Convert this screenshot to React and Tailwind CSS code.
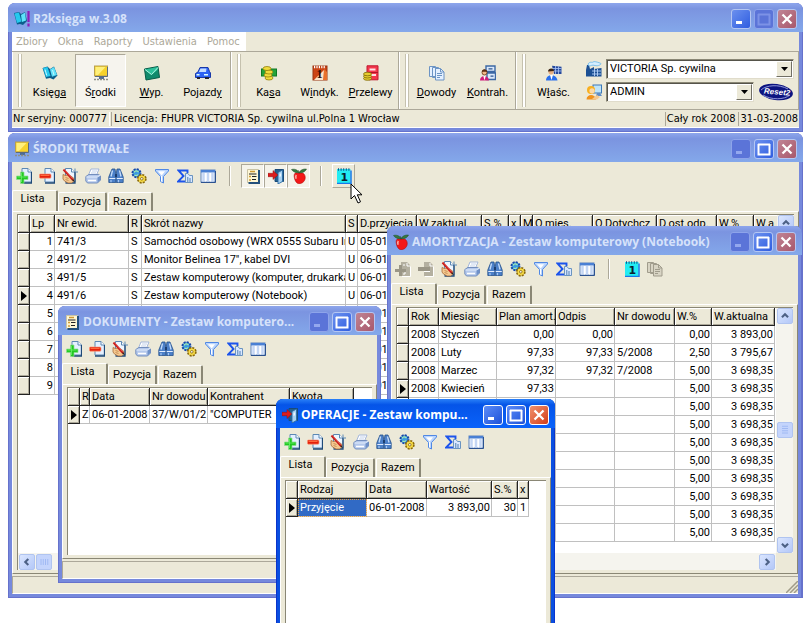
import clsx from 'clsx';

/* ---------- icons ---------- */

const Svg = ({ size = 16, children, className }) => (
  <svg width={size} height={size} viewBox="0 0 16 16" className={clsx('shrink-0', className)} aria-hidden="true">
    {children}
  </svg>
);

const Page = ({ x = 6, fill = '#e4f0ff', stroke = '#5c88b4' }) => (
  <>
    <path d={`M${x} .5h6l3.500 3.500v10h-9.500z`} fill={fill} stroke={stroke} />
    <path d={`M${x + 6} .5v3.500h3.500`} fill="#fff" stroke={stroke} />
    <path d={`M${x} 15h9.500v-11`} fill="none" stroke="#1f4a78" strokeWidth="1.300" />
  </>
);

const AddIcon = () => (
  <Svg>
    <Page />
    <path d="M4.500 4h3.500v4h4v3.500h-4v4h-3.500v-4h-4v-3.500h4z" fill="#22c822" stroke="#8fdc8f" strokeWidth=".7" />
    <path d="M5.500 5v9M1.500 9h9" stroke="#6cf06c" strokeWidth=".8" />
  </Svg>
);

const RemoveIcon = () => (
  <Svg>
    <Page />
    <rect x=".4" y="6" width="11.600" height="4.200" rx="1" fill="#e4200c" stroke="#ffa07c" strokeWidth=".7" />
    <path d="M1.500 7.500h9" stroke="#ff6a3c" />
  </Svg>
);

const AddOffIcon = () => (
  <Svg>
    <path d="M6 1h6l3 3v11h-9z" fill="#b4b0a0" />
    <path d="M4 4h3v4h4v3h-4v4h-3v-4h-4v-3h4z" fill="#9a9686" />
    <path d="M8 4h2M10 11v2h-2M12 2v3h3M7 15.500h8.500v-10" stroke="#fff" fill="none" />
  </Svg>
);

const RemoveOffIcon = () => (
  <Svg>
    <path d="M6 1h6l3 3v11h-9z" fill="#b4b0a0" />
    <rect y="6" width="12" height="4" fill="#9a9686" />
    <path d="M6 10.500h6M12 2v3h3M7 15.500h8.500v-10" stroke="#fff" fill="none" />
  </Svg>
);

const EditIcon = () => (
  <Svg>
    <Page x={3.500} fill="#eef6ff" />
    <path d="M13 .5v3.500h3" fill="none" stroke="#5c88b4" />
    <path d="M1 6.500l2.500 1 3-.5 3 1.500 2.500 2-.5 3-2 1.500H6l-3.500-2L1 11z" fill="#f4c890" stroke="#a0602c" strokeWidth=".7" />
    <path d="M3.500 9.500l3 1M3.500 11.500l3 1" stroke="#b8783c" strokeWidth=".7" />
    <path d="M1.500 1.500l9.500 10.500" stroke="#c81c1c" strokeWidth="2" />
    <path d="M2.500 1.500l8 9" stroke="#f47060" strokeWidth=".7" />
    <path d="M11 11l2 3-2.800-1.600z" fill="#2a1a10" />
  </Svg>
);

const PrintIcon = () => (
  <Svg>
    <path d="M6 1h8l-2.500 6H3.500z" fill="#fff" stroke="#a3b6da" />
    <path d="M.8 8.500l3-2h10l1.700 1.500v4l-3 3H2.500L.8 13z" fill="#b4c8ec" stroke="#6a86b8" strokeWidth=".9" />
    <path d="M1.500 9h11l2.500-2" stroke="#e4eefc" fill="none" />
    <path d="M12.500 9.500v5.200l2.800-2.700V8z" fill="#6e90c8" />
    <path d="M3 12.500h8" stroke="#fff" strokeWidth="1.500" />
    <path d="M7 3h5M6 5h5" stroke="#b4c6e6" strokeWidth=".8" />
  </Svg>
);

const BinocularsIcon = () => (
  <Svg>
    <path d="M4 1h3l.8 5v8.500H.8V9z" fill="#4c80c8" stroke="#24508c" strokeWidth=".8" />
    <path d="M12 1H9L8.200 6v8.500h7V9z" fill="#4c80c8" stroke="#24508c" strokeWidth=".8" />
    <path d="M4.500 2.500L3 8.500M11.500 2.500l1.500 6" stroke="#c4dcfa" strokeWidth="1.300" />
    <path d="M1.300 10.500h6M8.800 10.500h6" stroke="#e4eeff" />
    <path d="M3 12v2.300M10.500 12v2.300" stroke="#a8c8f4" strokeWidth="1.200" />
    <rect x="7" y="6" width="2" height="3" fill="#1c3e70" />
  </Svg>
);

const GearsIcon = () => (
  <Svg>
    <circle cx="5.500" cy="5.200" r="4" fill="#3d9be0" stroke="#1747a8" strokeWidth="2" strokeDasharray="2 1.100" />
    <path d="M3 4.500c1-2 3-2 4.500-.5M3.500 7c1 .8 2.500.8 3.500-.5" stroke="#a4ecb0" strokeWidth="1.200" fill="none" />
    <circle cx="10.800" cy="10.800" r="3.700" fill="#f2cf2c" stroke="#8a6a08" strokeWidth="2.400" strokeDasharray="1.900 1" />
    <circle cx="10.800" cy="10.800" r="3.200" fill="#f8dc48" />
    <circle cx="10.800" cy="10.800" r="1.300" fill="#fff" stroke="#7a5c06" strokeWidth=".8" />
  </Svg>
);

const FilterIcon = () => (
  <Svg>
    <path d="M1.500 1.500h13v1.500L9.500 8.500v6.500l-3-1.500V8.500L1.500 3z" fill="#bcd6fc" stroke="#5088e4" />
    <path d="M4 3.200h7L7.700 7.500z" fill="#fff" />
    <path d="M7.500 8v5.500" stroke="#fff" />
  </Svg>
);

const SigmaIcon = () => (
  <Svg>
    <path d="M10.500 5V2.500H1.500L6.500 8l-5.500 5.500H9" fill="none" stroke="#1c54ec" strokeWidth="1.900" />
    <path d="M8.500 5.500h2.500l1.500 2h3v7h-7z" fill="#dbe8ff" stroke="#6a94c0" />
    <path d="M10.800 9v5M13 10v4" stroke="#4f7fb4" />
  </Svg>
);

const ColumnsIcon = () => (
  <Svg>
    <rect x="1" y="2" width="14" height="12" fill="#fff" stroke="#5a82bc" />
    <rect x="1" y="2" width="14" height="2.500" fill="#4a80d4" />
    <path d="M3.500 5v8.500M8 5v8.500M12.500 5v8.500" stroke="#c4d6f4" strokeWidth="2.500" />
    <path d="M5.500 5v8.500M10.500 5v8.500" stroke="#fff" />
    <path d="M1 14.500h14.500V3" fill="none" stroke="#2c5290" />
  </Svg>
);

const DocumentIcon = () => (
  <Svg>
    <path d="M2.500 1.500h11v13h-11z" fill="#fff6d4" stroke="#c9c3a4" />
    <path d="M14 2v13H3.500" stroke="#24507c" strokeWidth="2" fill="none" />
    <path d="M5 3.500h5M4 8.500h2M4 12h2" stroke="#d09a34" strokeWidth="1.300" />
    <path d="M4 6h7.500M7 8.500h4.500M7 11.500h4" stroke="#222" strokeWidth="1.200" />
  </Svg>
);

const DoorIcon = () => (
  <Svg>
    <path d="M7 1.500h8.500v12H7z" fill="#24608c" stroke="#194a78" />
    <path d="M10 4.500l4.500-2.500v11.500L10 16z" fill="#a9d2f2" stroke="#2c6ca4" strokeWidth=".9" />
    <path d="M11.500 6l1.500-.8v3l-1.500.8z" fill="#e8f6ff" />
    <path d="M0 5.300h5V2.500l4.800 4.500L5 11.500V8.700H0z" fill="#dc1c1c" stroke="#8c1010" strokeWidth=".5" />
  </Svg>
);

const AppleIcon = () => (
  <Svg>
    <path d="M7 5.200C4.500 4 3 5.500 3.200 8.200c.3 4 2.200 7.500 5 7.500C12 15.500 14.500 12.500 14.200 9c-.3-3.500-3-5-7.200-3.800z" fill="#f41818" stroke="#b40c0c" strokeWidth=".6" />
    <path d="M5.300 7c-.7 1-.7 2.200-.2 3.700" stroke="#ffc0b4" strokeWidth="1.400" fill="none" />
    <path d="M8 5.500L7.500 2M8 4.500C5 5 2 4 .5 1.500c3-.8 6 0 7.500 3zM8 4.500c1-2 4-4 7.500-3.500-1 2.500-4.500 4.500-7.500 3.500z" fill="#357a40" stroke="#1c4a24" strokeWidth=".5" />
  </Svg>
);

const CalendarIcon = () => (
  <Svg>
    <rect x="1" y="1" width="13.500" height="14.500" fill="#22ecf2" />
    <path d="M15 2.500v13H1" stroke="#1878e8" strokeWidth="1.500" fill="none" />
    <path d="M2 1.500h12" stroke="#14508c" strokeWidth="2.500" strokeDasharray="1 1.600" />
    <text x="4.500" y="13" fontSize="11" fontWeight="700" fontFamily="DejaVu Sans, sans-serif" fill="#0a2230">1</text>
  </Svg>
);

const CalendarRedIcon = () => (
  <Svg>
    <rect x="1" y="1" width="14" height="14" fill="#cc4414" stroke="#9a3410" />
    <path d="M2 2h12" stroke="#fff" strokeWidth="2.500" strokeDasharray="1.200 1.200" />
    <path d="M2 15L12 5v10z" fill="#fbe4cc" />
    <path d="M12 4l3 3v8h-4z" fill="#e8702c" />
    <text x="4.500" y="13" fontSize="12" fontWeight="700" fontFamily="Liberation Serif, serif" fill="#2a0d04">1</text>
  </Svg>
);

const BookIcon = () => (
  <Svg>
    <path d="M.5 3l5-1.500L8 4l4-2.500 3.500 9-4 4L8 13l-4 .8z" fill="#0a5f8c" />
    <path d="M1 3l4.500-1 3 9L4 12z" fill="#25c9ee" />
    <path d="M8 4.500L12 2l3 8-5 1.800z" fill="#5fe2fa" />
    <path d="M3 4.500l1.800 6M10.500 5l1.500 5" stroke="#c4f8ff" />
  </Svg>
);

const LogoIcon = () => (
  <Svg>
    <path d="M0 2l5-1 2 2 4-2 2 9-4 4-3-1-3 .5z" fill="#0a5f8c" />
    <path d="M.5 2.500l4.500-1 2.500 9L3 12z" fill="#25c9ee" />
    <path d="M7 4l4-2.500 1 8-4 1.500z" fill="#5fe2fa" />
    <path d="M14.500 0v11M14.500 12.500v3" stroke="#8a1fb8" strokeWidth="2.200" />
  </Svg>
);

const MonitorIcon = () => (
  <Svg>
    <rect x="1.500" y="1" width="13" height="10" fill="#f6d22c" stroke="#b8a050" />
    <path d="M2.500 10V2h10L5 10z" fill="#fff07c" />
    <path d="M14.500 2v9.500H2" stroke="#5a6a80" fill="none" />
    <path d="M6 12h5v2H6z" fill="#4f6c94" />
    <path d="M1 14.500h14" stroke="#8d8f86" strokeWidth="1.500" strokeDasharray="2 1" />
  </Svg>
);

const EnvelopeIcon = () => (
  <Svg>
    <path d="M.5 4L14 1.500l1.500 11L2 15z" fill="#108a6c" stroke="#075c48" />
    <path d="M1 4.500l13-2.500-.5 3-6 5z" fill="#2cc09a" />
    <path d="M1 4.500l6.500 5 6.500-7" stroke="#b0f4e2" fill="none" />
  </Svg>
);

const CarIcon = () => (
  <Svg>
    <path d="M5 2.500h8l1.500 4 1 1.500v4.500H.5V8.500L3 7z" fill="#2c62f4" stroke="#1838a8" />
    <path d="M5.500 3.500h6L11 7H3.800z" fill="#c4dcff" />
    <path d="M1.500 9.800h3M9 9.800h4" stroke="#dff" strokeWidth="1.500" />
    <rect x="2" y="12" width="3" height="2" fill="#223" />
    <rect x="10" y="12" width="4" height="2" fill="#223" />
  </Svg>
);

const CashIcon = () => (
  <Svg>
    <rect x="0.500" y="4" width="15" height="7" fill="#25a33a" stroke="#0e7a24" />
    <g fill="#f0dc3c" stroke="#94800c" strokeWidth=".8">
      <ellipse cx="8" cy="13" rx="4" ry="2" />
      <ellipse cx="7" cy="10" rx="4" ry="2" />
      <ellipse cx="8" cy="7" rx="4" ry="2" />
      <ellipse cx="6" cy="3.500" rx="4" ry="2" />
    </g>
  </Svg>
);

const TransferIcon = () => (
  <Svg>
    <path d="M4 .8h11v14H6V8H4z" fill="#f4384c" stroke="#c01830" />
    <path d="M6.500 4.500h6M8 10h5" stroke="#ffe0e4" strokeWidth="1.800" />
    <path d="M4 7.500h11" stroke="#b01428" />
    <g fill="#e4cc30" stroke="#7c6a08" strokeWidth=".8">
      <ellipse cx="4.500" cy="13.500" rx="4" ry="1.800" />
      <ellipse cx="4.500" cy="11.200" rx="4" ry="1.800" />
      <ellipse cx="4.500" cy="9" rx="4" ry="1.800" />
    </g>
  </Svg>
);

const DocsIcon = ({ off }) => {
  const fill = off ? '#d8d4c4' : '#e4f0ff';
  const line = off ? '#a09c8c' : '#6c94c4';
  return (
    <Svg>
      <path d="M.5 1.500h6v10h-6zM3.500 2.500h6v10h-6z" fill={fill} stroke={line} />
      <path d="M6.500 3.500h5l3.500 3.500v8H6.500z" fill={fill} stroke={line} />
      <path d="M11.500 3.500v3.500H15M8 8.500h5M8 10.500h5M8 12.500h3" stroke={line} fill="none" />
    </Svg>
  );
};

const ContactIcon = () => (
  <Svg>
    <path d="M6 1h9v5.500H6zM7 8h8.500v6.500H7z" fill="#dbe8fa" stroke="#3c68a4" strokeWidth="1.400" />
    <path d="M8.500 3.800h4M10.500 11.200h3" stroke="#2c5590" strokeWidth="1.300" />
    <circle cx="4.500" cy="7.500" r="2.500" fill="#f0b888" stroke="#6a3414" strokeWidth=".8" />
    <path d="M1.800 6.800c0-3.500 5.200-3.500 5.400 0z" fill="#5b2c10" />
    <path d="M0 15.500c0-6 8.500-6 9 0z" fill="#d01c78" />
    <path d="M3.300 11l1.200 4.500L5.800 11z" fill="#fff" />
  </Svg>
);

const OwnerIcon = () => (
  <Svg>
    <path d="M6 .8l9.500 1V9H8z" fill="#24489c" />
    <path d="M7 3.500h8.500M7 6h8.500M9.500 1v8M12.500 1.500V9" stroke="#a9c4f4" strokeWidth=".8" />
    <circle cx="5" cy="6.800" r="2.600" fill="#e8b080" />
    <path d="M2 6.500c0-4 6-4 6-.5z" fill="#3a2414" />
    <path d="M0 15.500c0-7 10.500-7 11.500 0z" fill="#2a70ec" />
    <path d="M4 10l1.500 5L7 10z" fill="#fff" />
  </Svg>
);

const FactoryIcon = () => (
  <Svg>
    <path d="M0 15.500V9l1-5h2l1 4 4-2v2l7.500-1v8.500z" fill="#1c5094" />
    <path d="M6 10h9M6 13h9M8.500 8v7M11.500 8v7" stroke="#b4d0f8" strokeWidth=".9" />
    <path d="M2 3c2-3 4-1 5-2s4 0 7 1-2 3.500-5 2.500-4 .5-6 .5z" fill="#d4eeff" stroke="#68b8e8" strokeWidth=".8" />
  </Svg>
);

const UserIcon = () => (
  <Svg>
    <rect x="7" y="1" width="8.500" height="8" fill="#bfe4f8" stroke="#3c78b8" />
    <path d="M11 9h3l2 3h-6z" fill="#5c8cc8" />
    <circle cx="5" cy="6" r="4" fill="#f8b020" />
    <circle cx="6" cy="6.800" r="2.600" fill="#fbd9a8" />
    <path d="M.5 15.500c0-6 9-6 9.500 0z" fill="#f0921c" />
    <path d="M6 15l5-4 3 2-3 2.500z" fill="#f4c890" />
  </Svg>
);

/* ---------- window chrome ---------- */

const CaptionButton = ({ kind, active, dim }) => (
  <button
    aria-label={kind}
    className={clsx(
      'w-5 h-5 rounded-[3px] border flex items-center justify-center',
      active ? 'border-white' : dim ? 'border-[#8ea4ea]' : 'border-[#b4c6f2]',
      kind === 'close'
        ? active ? 'bg-linear-to-br from-[#f0906c] to-[#d23a10]' : 'bg-linear-to-br from-[#c08494] to-[#a8586c]'
        : active
          ? 'bg-linear-to-br from-[#5c8cf8] to-[#1c50d8]'
          : dim ? 'bg-[#5b74d8]' : 'bg-linear-to-br from-[#6c90ee] to-[#2f5ce0]'
    )}
  >
    <Svg size={16}>
      {kind === 'minimize' && <path d="M3 11.500h6" stroke={dim ? '#94a8ee' : '#fff'} strokeWidth="3" />}
      {kind === 'maximize' && (
        <path d="M2.500 3v10.500h11V3M2 3.500h12" stroke={dim ? '#7d92e6' : '#fff'} strokeWidth="2" fill="none" />
      )}
      {kind === 'close' && <path d="M3.500 3.500l9 9M12.500 3.500l-9 9" stroke="#fff" strokeWidth="2.300" />}
    </Svg>
  </button>
);

const Window = ({ title, icon, active, minDim = true, maxDim, className, children }) => (
  <section
    className={clsx(
      'flex flex-col rounded-t-[7px] overflow-hidden',
      active ? 'bg-[#0a4fe0] shadow-[inset_0_0_0_1px_#0a34cc]' : 'bg-[#7689dc] shadow-[inset_0_0_0_1px_#6672cc]',
      className
    )}
  >
    <header
      className={clsx(
        'h-[29px] shrink-0 flex items-center gap-[3px] pl-[6px] pr-[6px] pt-[3px] bg-linear-to-b',
        active
          ? 'from-[#2a80f8] via-[#0554e8] via-20% to-[#0a62fa]'
          : 'from-[#8ea6ec] via-[#7b94e0] via-20% to-[#84a8ea]'
      )}
    >
      {icon}
      <h2
        className={clsx(
          "flex-1 min-w-0 whitespace-nowrap text-[12px] font-bold font-['Open_Sans',sans-serif]",
          active ? 'text-white' : 'text-[#d6e2fa]'
        )}
      >
        {title}
      </h2>
      <div className="flex gap-[3px]">
        <CaptionButton kind="minimize" active={active} dim={minDim && !active} />
        <CaptionButton kind="maximize" active={active} dim={maxDim} />
        <CaptionButton kind="close" active={active} />
      </div>
    </header>
    <div className="flex-1 min-h-0 mx-1 mb-1 flex flex-col bg-[#ece9d8]">{children}</div>
  </section>
);

/* ---------- list windows ---------- */

const ToolButton = ({ label, pressed, raised, children }) => (
  <button
    aria-label={label}
    className={clsx(
      'w-[23px] h-6 flex items-center justify-center border',
      pressed && 'bg-[#f5f3ea] border-t-[#aca899] border-l-[#aca899] border-b-white border-r-white',
      raised && 'border-t-white border-l-white border-b-[#aca899] border-r-[#aca899]',
      !pressed && !raised && 'border-transparent'
    )}
  >
    {children}
  </button>
);

const ToolSeparator = () => (
  <div className="w-[22px] flex justify-center">
    <div className="w-[2px] h-5 border-l border-[#aca899] bg-white" />
  </div>
);

const ListTools = ({ readOnly, children }) => (
  <div className="h-7 shrink-0 flex items-center">
    <ToolButton label="Dodaj">{readOnly ? <AddOffIcon /> : <AddIcon />}</ToolButton>
    <ToolButton label="Usuń">{readOnly ? <RemoveOffIcon /> : <RemoveIcon />}</ToolButton>
    <ToolButton label="Edytuj"><EditIcon /></ToolButton>
    <ToolButton label="Drukuj"><PrintIcon /></ToolButton>
    <ToolButton label="Szukaj"><BinocularsIcon /></ToolButton>
    <ToolButton label="Opcje"><GearsIcon /></ToolButton>
    <ToolButton label="Filtr"><FilterIcon /></ToolButton>
    <ToolButton label="Suma"><SigmaIcon /></ToolButton>
    <ToolButton label="Kolumny"><ColumnsIcon /></ToolButton>
    {children}
  </div>
);

const Tabs = () => (
  <div role="tablist" className="h-[21px] shrink-0 flex items-end">
    <button
      role="tab"
      aria-selected="true"
      className="w-[46px] h-[21px] pb-1 pr-1 border-l border-t border-white border-r-2 border-r-[#8a8775] rounded-t-[2px]"
    >
      Lista
    </button>
    {['Pozycja', 'Razem'].map((tab) => (
      <button
        key={tab}
        role="tab"
        aria-selected="false"
        className="px-[4px] mr-px h-[19px] border-l border-t border-white border-r-2 border-r-[#8a8775] rounded-t-[2px]"
      >
        {tab}
      </button>
    ))}
  </div>
);

const arrows = {
  up: 'M4.500 9.500L8 6l3.500 3.500',
  down: 'M4.500 6.500L8 10l3.500-3.500',
  left: 'M9.500 4.500L6 8l3.500 3.500',
  right: 'M6.500 4.500L10 8l-3.500 3.500',
};

const ScrollButton = ({ dir }) => (
  <button
    aria-label={dir}
    className="w-4 h-4 shrink-0 rounded-[2px] border border-[#b0c4f0] bg-linear-to-br from-[#dbe6fe] to-[#b4c8f8] flex items-center justify-center"
  >
    <Svg size={14}>
      <path d={arrows[dir]} fill="none" stroke="#4d6185" strokeWidth="2.400" />
    </Svg>
  </button>
);

const ScrollThumb = ({ className, vertical }) => (
  <div
    className={clsx(
      'w-4 h-4 shrink-0 rounded-[2px] border border-[#b0c4f0] bg-[#c4d4fc] flex items-center justify-center',
      className
    )}
  >
    <Svg size={12}>
      <path d={vertical ? 'M4 3h8M4 6h8M4 9h8M4 12h8' : 'M4 4v8M7 4v8M10 4v8M13 4v8'} stroke="#94b0f0" />
    </Svg>
  </div>
);

const headCell =
  'h-[18px] border-r border-b border-[#222] bg-[#ece9d8] font-normal text-left shadow-[inset_1px_1px_0_#fff,inset_-1px_-1px_0_#aca899]';

const textCell = 'pl-[2px] pr-px overflow-hidden whitespace-nowrap';

const Grid = ({ columns, rows, current, selected }) => (
  <table
    className="table-fixed border-separate border-spacing-0"
    style={{ width: columns.reduce((sum, col) => sum + col.w, 12) }}
  >
    <colgroup>
      <col style={{ width: 12 }} />
      {columns.map((col, i) => (
        <col key={i} style={{ width: col.w }} />
      ))}
    </colgroup>
    <thead>
      <tr>
        <th className={headCell} aria-label="Wiersz" />
        {columns.map((col, i) => (
          <th key={i} className={clsx(headCell, textCell)}>
            {col.name}
          </th>
        ))}
      </tr>
    </thead>
    <tbody>
      {rows.map((row, r) => (
        <tr key={r}>
          <td className={headCell}>
            {r === current && (
              <svg width="11" height="12" viewBox="0 0 11 12" className="block">
                <path d="M3 1l6 5-6 5z" />
              </svg>
            )}
          </td>
          {columns.map((col, c) => (
            <td
              key={c}
              className={clsx(
                'h-[18px] border-r border-b border-[#c0c0c0]',
                textCell,
                col.right && 'text-right',
                selected && r === current && c === 0 && 'bg-[#316ac5] text-white outline-1 outline-dotted -outline-offset-1 outline-[#e8a040]'
              )}
            >
              {row[c]}
            </td>
          ))}
        </tr>
      ))}
    </tbody>
  </table>
);

const ListPanel = ({ scroll, thumb, hthumb, children }) => (
  <>
    <div className="flex-1 min-h-0 flex flex-col border-t border-l border-white border-b border-b-[#8a8775] border-r border-r-[#8a8775] px-1 pt-[2px] pb-[3px]">
      <div className="flex-1 min-h-0 flex flex-col border-t border-l border-[#8a8775] bg-white">
        <div className="flex-1 min-h-0 flex">
          <div className="flex-1 min-w-0 overflow-hidden">{children}</div>
          {scroll && (
            <div className="w-[17px] shrink-0 flex flex-col items-center justify-between bg-[#f5f4ee]">
              <div>
                <ScrollButton dir="up" />
                {thumb && <ScrollThumb vertical className="mt-[98px]" />}
              </div>
              <ScrollButton dir="down" />
            </div>
          )}
        </div>
        {scroll && (
          <div className="h-[17px] shrink-0 flex">
            <div className="flex-1 flex items-center gap-px px-px bg-[#f5f4ee]">
              <ScrollButton dir="left" />
              {hthumb && <ScrollThumb />}
              <div className="flex-1" />
              <ScrollButton dir="right" />
            </div>
            <div className="w-[17px] bg-[#ece9d8]" />
          </div>
        )}
      </div>
    </div>
    <footer className="h-[18px] mt-[2px] shrink-0 border-t border-l border-[#aca899] border-b border-b-white flex justify-end items-end">
      <svg width="12" height="12" viewBox="0 0 12 12" aria-hidden="true">
        <path d="M0 12L12 0M4 12l8-8M8 12l4-4" stroke="#a09c88" strokeWidth="1.500" />
      </svg>
    </footer>
  </>
);

/* ---------- data ---------- */

const assetColumns = [
  { name: 'Lp', w: 25, right: true },
  { name: 'Nr ewid.', w: 74 },
  { name: 'R', w: 13 },
  { name: 'Skrót nazwy', w: 204 },
  { name: 'S', w: 12 },
  { name: 'D.przyjęcia', w: 59 },
  { name: 'W.zaktual.', w: 65 },
  { name: 'S.%', w: 27 },
  { name: 'x', w: 12 },
  { name: 'M', w: 12 },
  { name: 'O.mies.', w: 60 },
  { name: 'O.Dotychcz', w: 64 },
  { name: 'D.ost.odp.', w: 60 },
  { name: 'W.%', w: 37 },
  { name: 'W.a', w: 64 },
];

const assets = [
  ['1', '741/3', 'S', 'Samochód osobowy (WRX 0555 Subaru Ir', 'U', '05-01'],
  ['2', '491/2', 'S', 'Monitor Belinea 17", kabel DVI', 'U', '06-01'],
  ['3', '491/5', 'S', 'Zestaw komputerowy (komputer, drukarka)', 'U', '06-01'],
  ['4', '491/6', 'S', 'Zestaw komputerowy (Notebook)', 'U', '06-01'],
  ['5', '', '', '', '', '06-01'],
  ['6', '', '', '', '', '06-01'],
  ['7', '', '', '', '', '06-01'],
  ['8', '', '', '', '', '06-01'],
  ['9', '', '', '', '', '06-01'],
];

const depreciationColumns = [
  { name: 'Rok', w: 30 },
  { name: 'Miesiąc', w: 58 },
  { name: 'Plan amort.', w: 59, right: true },
  { name: 'Odpis', w: 59, right: true },
  { name: 'Nr dowodu', w: 60 },
  { name: 'W.%', w: 37, right: true },
  { name: 'W.aktualna', w: 63, right: true },
];

const depreciation = [
  ['2008', 'Styczeń', '0,00', '0,00', '', '0,00', '3 893,00'],
  ['2008', 'Luty', '97,33', '97,33', '5/2008', '2,50', '3 795,67'],
  ['2008', 'Marzec', '97,32', '97,32', '7/2008', '5,00', '3 698,35'],
  ['2008', 'Kwiecień', '97,33', '', '', '5,00', '3 698,35'],
  ...Array.from({ length: 8 }, () => ['', '', '', '', '', '5,00', '3 698,35']),
];

const documentColumns = [
  { name: 'R', w: 10 },
  { name: 'Data', w: 60 },
  { name: 'Nr dowodu', w: 58 },
  { name: 'Kontrahent', w: 82 },
  { name: 'Kwota', w: 64, right: true },
];

const operationColumns = [
  { name: 'Rodzaj', w: 69 },
  { name: 'Data', w: 60 },
  { name: 'Wartość', w: 65, right: true },
  { name: 'S.%', w: 26, right: true },
  { name: 'x', w: 11 },
];

/* ---------- main window ---------- */

const Group = ({ grow, children }) => (
  <div
    className={clsx(
      'flex items-stretch gap-[2px] pl-[5px] pr-[2px] py-[2px] border-l border-l-white border-r border-r-[#aca899]',
      grow && 'flex-1'
    )}
  >
    <div className="w-1 border-x border-[#c5c1ae] bg-white" />
    <div className={clsx('flex', grow && 'flex-1')}>{children}</div>
  </div>
);

const BigButton = ({ icon, pressed, children }) => (
  <button
    className={clsx(
      'w-[51px] shrink-0 flex flex-col items-center gap-1 pt-[10px] border',
      pressed ? 'bg-[#f6f4ee] border-t-[#aca899] border-l-[#aca899] border-b-white border-r-white' : 'border-transparent'
    )}
  >
    {icon}
    <span className="leading-[16px]">{children}</span>
  </button>
);

const Combo = ({ label, value, className }) => (
  <div className={clsx('relative h-5', className)}>
    <select
      aria-label={label}
      defaultValue={value}
      className="appearance-none w-full h-5 pl-[3px] bg-white border border-[#8a8775] border-b-[#e0dccb] border-r-[#e0dccb] shadow-[inset_1px_1px_0_#55534a]"
    >
      <option>{value}</option>
    </select>
    <span className="pointer-events-none absolute right-[2px] top-[2px] w-4 h-4 bg-[#ece9d8] border border-white border-r-[#716f64] border-b-[#716f64] flex items-center justify-center">
      <svg width="7" height="4" viewBox="0 0 7 4">
        <path d="M0 0h7L3.500 4z" />
      </svg>
    </span>
  </div>
);

const MainWindow = () => (
  <Window title="R2księga w.3.08" icon={<LogoIcon />} minDim={false} maxDim className="shrink-0">
    <nav className="h-[19px] w-max flex items-center gap-[10px] pl-1 pr-[6px] bg-white text-[#aca899] font-['DejaVu_Sans_Condensed',sans-serif]">
      {['Zbiory', 'Okna', 'Raporty', 'Ustawienia', 'Pomoc'].map((item) => (
        <button key={item}>{item}</button>
      ))}
    </nav>
    <div className="h-[59px] flex border-t border-b border-t-[#aca899] border-b-[#aca899]">
      <Group>
        <BigButton icon={<BookIcon />}>Księ<u>ga</u></BigButton>
        <BigButton icon={<MonitorIcon />} pressed>Ś<u>r</u>odki</BigButton>
        <BigButton icon={<EnvelopeIcon />}><u>W</u>yp.</BigButton>
        <BigButton icon={<CarIcon />}>Pojazd<u>y</u></BigButton>
      </Group>
      <Group>
        <BigButton icon={<CashIcon />}>Ka<u>s</u>a</BigButton>
        <BigButton icon={<CalendarRedIcon />}>W<u>i</u>ndyk.</BigButton>
        <BigButton icon={<TransferIcon />}><u>P</u>rzelewy</BigButton>
      </Group>
      <Group>
        <BigButton icon={<DocsIcon />}><u>D</u>owody</BigButton>
        <BigButton icon={<ContactIcon />}><u>K</u>ontrah.</BigButton>
      </Group>
      <Group grow>
        <BigButton icon={<OwnerIcon />}>W<u>ł</u>aśc.</BigButton>
        <div className="flex-1 flex flex-col justify-center gap-[3px] pl-[7px] pr-[2px]">
          <div className="flex items-center gap-1">
            <FactoryIcon />
            <Combo label="Firma" value="VICTORIA Sp. cywilna" className="flex-1" />
          </div>
          <div className="flex items-center gap-1">
            <UserIcon />
            <Combo label="Użytkownik" value="ADMIN" className="flex-1" />
            <svg width="36" height="20" viewBox="0 0 36 20" className="shrink-0" aria-label="Reset2">
              <ellipse cx="18" cy="10" rx="17" ry="8" fill="#0c1480" transform="rotate(8 18 10)" />
              <path d="M3 8c5-5 18-6 27-1M5 13c8 5 21 5 27 0" stroke="#8f96d8" fill="none" />
              <text x="6" y="12.500" fontSize="8" fontWeight="700" fontStyle="italic" fontFamily="Liberation Sans, sans-serif" fill="#fff" transform="rotate(5 18 10)">
                Reset2
              </text>
            </svg>
          </div>
        </div>
      </Group>
    </div>
    <footer className="h-[18px] flex items-center gap-px whitespace-nowrap border-b border-white font-['DejaVu_Sans_Condensed',sans-serif]">
      <span className="pl-px pr-[2px] border-r border-white">Nr seryjny: 000777</span>
      <span className="flex-1 pl-[2px] border-l border-[#aca899]">
        Licencja: FHUPR VICTORIA Sp. cywilna ul.Polna 1 Wrocław
      </span>
      <span className="pl-px pr-[2px] border-l border-[#aca899]">Cały rok 2008</span>
      <span className="pl-px pr-px border-l border-[#aca899]">31-03-2008</span>
    </footer>
  </Window>
);

export default function App() {
  return (
    <main className="relative h-screen overflow-hidden flex flex-col gap-px pt-[3px] pb-[25px] pl-2 pr-[5px] bg-white text-black text-[11px] leading-[14px] font-[Roboto,Arial,sans-serif]">
      <MainWindow />

      <Window title="ŚRODKI TRWAŁE" icon={<MonitorIcon />} className="flex-1 min-h-0">
        <ListTools>
          <ToolSeparator />
          <ToolButton label="Dokumenty" pressed><DocumentIcon /></ToolButton>
          <ToolButton label="Operacje" pressed><DoorIcon /></ToolButton>
          <ToolButton label="Amortyzacja" pressed><AppleIcon /></ToolButton>
          <ToolSeparator />
          <ToolButton label="Kalendarz" raised><CalendarIcon /></ToolButton>
        </ListTools>
        <Tabs />
        <ListPanel scroll hthumb>
          <Grid columns={assetColumns} rows={assets} current={3} />
        </ListPanel>
      </Window>

      <Window
        title="DOKUMENTY - Zestaw komputero..."
        icon={<DocumentIcon />}
        className="absolute left-[58px] top-[306px] w-[323px] h-[277px]"
      >
        <ListTools />
        <Tabs />
        <ListPanel>
          <Grid
            columns={documentColumns}
            rows={[['Z', '06-01-2008', '37/W/01/2', '"COMPUTER', '']]}
            current={0}
          />
        </ListPanel>
      </Window>

      <Window
        title="AMORTYZACJA - Zestaw komputerowy (Notebook)"
        icon={<AppleIcon />}
        className="absolute left-[387px] right-[6px] top-[226px] bottom-[25px]"
      >
        <ListTools readOnly>
          <ToolSeparator />
          <ToolButton label="Kalendarz"><CalendarIcon /></ToolButton>
          <ToolButton label="Dowody"><DocsIcon off /></ToolButton>
        </ListTools>
        <Tabs />
        <ListPanel scroll thumb>
          <Grid columns={depreciationColumns} rows={depreciation} current={3} />
        </ListPanel>
      </Window>

      <Window
        title="OPERACJE - Zestaw kompu..."
        icon={<DoorIcon />}
        active
        className="absolute left-[276px] top-[399px] w-[279px] h-[277px]"
      >
        <ListTools />
        <Tabs />
        <ListPanel>
          <Grid
            columns={operationColumns}
            rows={[['Przyjęcie', '06-01-2008', '3 893,00', '30', '1']]}
            current={0}
            selected
          />
        </ListPanel>
      </Window>

      <svg width="14" height="22" viewBox="0 0 14 22" className="absolute left-[350px] top-[183px]" aria-hidden="true">
        <path d="M1 1v15l3.500-3.500L8 20l2.500-1.200-3.200-7H12z" fill="#fff" stroke="#000" />
      </svg>
    </main>
  );
}
